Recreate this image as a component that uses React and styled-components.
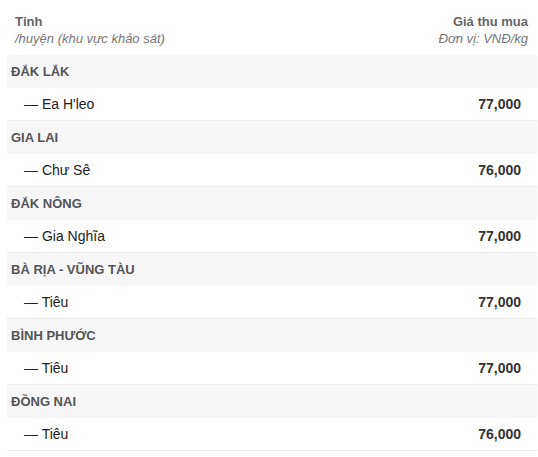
import React from 'react'
import styled, { createGlobalStyle } from 'styled-components'

const Global = createGlobalStyle`
  body {
    margin: 0;
    background: #fff;
    font-family: 'Liberation Sans', Arial, sans-serif;
  }
`

const Wrap = styled.div`
  padding: 0 1px 0 7px;
`

const Head = styled.div`
  display: flex;
  justify-content: space-between;
  align-items: flex-start;
  height: 55px;
  padding: 13px 9px 0 8px;
  box-sizing: border-box;
  font-size: 13px;
  line-height: 17px;
`

const HeadCol = styled.div`
  display: flex;
  flex-direction: column;
  text-align: ${p => (p.right ? 'right' : 'left')};
`

const HeadTitle = styled.span`
  font-weight: bold;
  color: #666;
`

const HeadNote = styled.span`
  font-style: italic;
  color: #777;
`

const Group = styled.div`
  height: 33px;
  display: flex;
  align-items: center;
  padding-left: 4px;
  background: #f7f7f7;
  color: #555;
  font-size: 13px;
  font-weight: bold;
`

const Item = styled.div`
  height: 32px;
  display: flex;
  align-items: center;
  justify-content: space-between;
  padding: 0 16px 0 17px;
  border-bottom: 1px solid #ebebeb;
  font-size: 14px;
  color: #222;
`

const Price = styled.span`
  font-weight: bold;
  color: #333;
`

const data = [
  ['ĐẮK LẮK', "Ea H'leo", '77,000'],
  ['GIA LAI', 'Chư Sê', '76,000'],
  ['ĐẮK NÔNG', 'Gia Nghĩa', '77,000'],
  ['BÀ RỊA - VŨNG TÀU', 'Tiêu', '77,000'],
  ['BÌNH PHƯỚC', 'Tiêu', '77,000'],
  ['ĐỒNG NAI', 'Tiêu', '76,000']
]

export default function App() {
  return (
    <Wrap>
      <Global />
      <Head>
        <HeadCol>
          <HeadTitle>Tỉnh</HeadTitle>
          <HeadNote>/huyện (khu vực khảo sát)</HeadNote>
        </HeadCol>
        <HeadCol right>
          <HeadTitle>Giá thu mua</HeadTitle>
          <HeadNote>Đơn vị: VNĐ/kg</HeadNote>
        </HeadCol>
      </Head>
      {data.map(([prov, area, price]) => (
        <React.Fragment key={prov}>
          <Group>{prov}</Group>
          <Item>
            <span>— {area}</span>
            <Price>{price}</Price>
          </Item>
        </React.Fragment>
      ))}
    </Wrap>
  )
}
